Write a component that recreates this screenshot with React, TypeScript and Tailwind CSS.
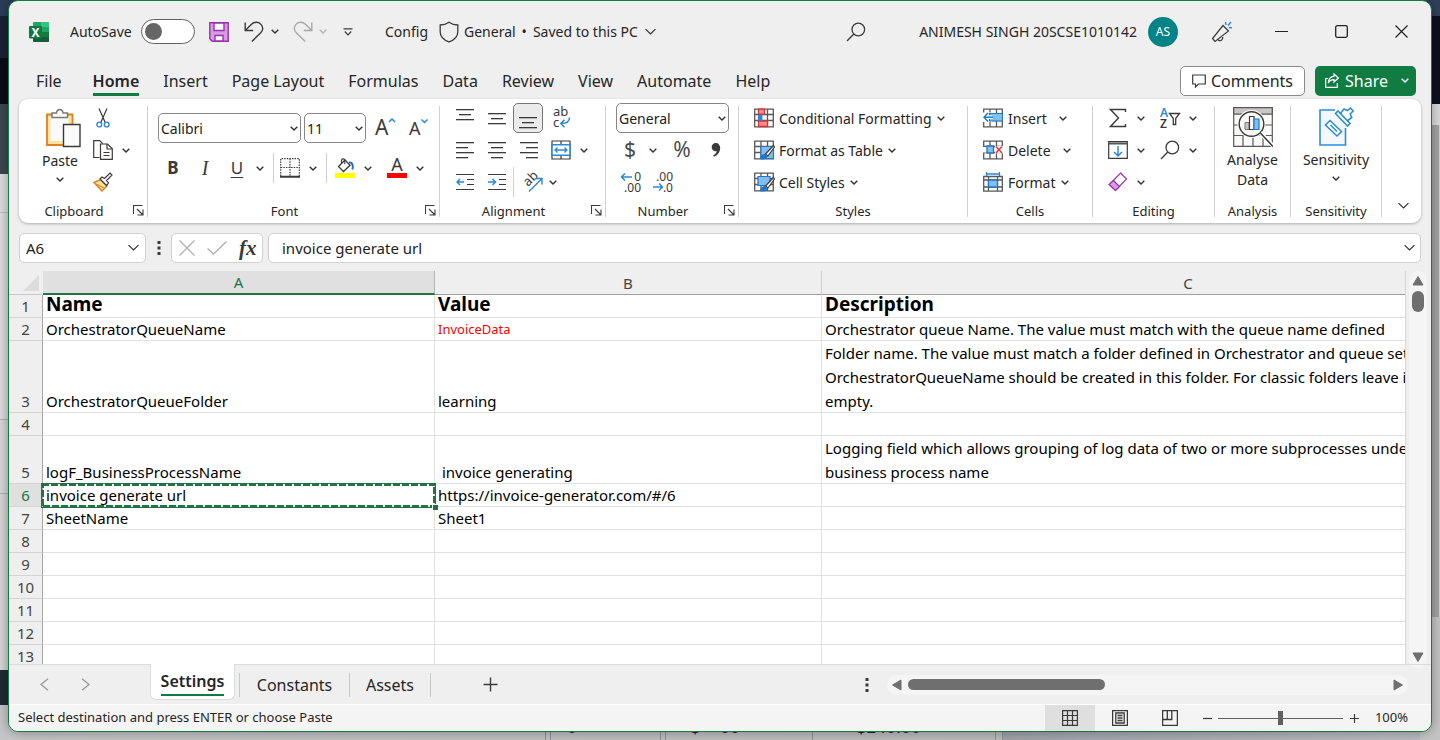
import React from "react";

type Kids = { children?: React.ReactNode };

const INK = "#3b3a39";

function Chevron({ size = 8, color = "#323130" }: { size?: number; color?: string }) {
  return (
    <svg width={size} height={size / 2 + 1} viewBox="0 0 8 5" fill="none" aria-hidden="true">
      <path d="M0.7 0.7 L4 4 L7.3 0.7" stroke={color} strokeWidth={size > 10 ? 0.8 : 1.4} />
    </svg>
  );
}

function IconButton({ label, className = "w-8", children }: Kids & { label: string; className?: string }) {
  return (
    <button type="button" aria-label={label} className={`flex h-8 shrink-0 items-center justify-center ${className}`}>
      {children}
    </button>
  );
}

function MenuArrow({ label, className = "w-3.5" }: { label: string; className?: string }) {
  return (
    <IconButton label={label} className={className}>
      <Chevron />
    </IconButton>
  );
}

function Group({
  title,
  width,
  launcher = false,
  children,
}: Kids & { title: string; width: string; launcher?: boolean }) {
  return (
    <section aria-label={title} className={`flex shrink-0 items-center ${width}`}>
      <div className="flex h-full min-w-0 flex-1 flex-col pt-[3px]">
        <div className="h-24">{children}</div>
        <div className={`flex h-[25px] items-center text-[13px] leading-4 ${launcher ? "gap-1 pr-[3px]" : ""}`}>
          <span className="flex-1 text-center">{title}</span>
          {launcher && (
            <button type="button" aria-label={`${title} settings`}>
              <svg width="11" height="11" viewBox="0 0 11 11" fill="none" stroke={INK}>
                <path d="M0.5 9V0.5H9.5M4 4l5.5 5.5M10 4.5V10H4.5" strokeWidth="1.1" />
              </svg>
            </button>
          )}
        </div>
      </div>
      <div className="h-[111px] w-px bg-[#d1d1d1]" />
    </section>
  );
}

function Picker({ label, value, className }: { label: string; value: string; className: string }) {
  return (
    <div className={`relative h-[30px] shrink-0 ${className}`}>
      <select
        aria-label={label}
        defaultValue={value}
        className="h-full w-full appearance-none rounded-[5px] border border-[#868686] bg-white pl-0.5 text-[14px] text-[#222]"
      >
        <option>{value}</option>
      </select>
      <span className="pointer-events-none absolute inset-y-0 right-[3px] flex items-center">
        <Chevron />
      </span>
    </div>
  );
}

/* ---------- icons ---------- */

function ExcelLogo() {
  return (
    <svg width="20" height="20" viewBox="0 0 20 20" aria-hidden="true">
      <rect x="4" y="0" width="16" height="20" rx="1.2" fill="#21a366" />
      <path d="M12 0h6.8A1.2 1.2 0 0 1 20 1.2V5h-8z" fill="#33c481" />
      <rect x="4" y="5" width="8" height="5" fill="#107c41" />
      <rect x="4" y="10" width="8" height="5" fill="#185c37" />
      <rect x="12" y="10" width="8" height="5" fill="#107c41" />
      <path d="M4 15h16v3.8a1.2 1.2 0 0 1-1.2 1.2H5.2A1.2 1.2 0 0 1 4 18.800z" fill="#185c37" />
      <rect x="0" y="4" width="13" height="12.500" rx="1" fill="#0f7a3f" />
      <text x="6.500" y="14.500" textAnchor="middle" fontSize="12" fontWeight="700" fill="#fff">X</text>
    </svg>
  );
}

function SaveIcon() {
  return (
    <svg width="20" height="20" viewBox="0 0 20 20" fill="none" stroke="#9b2fae" strokeWidth="1.400" aria-hidden="true">
      <path d="M0.800 0.800h18.400v18.400H3.200L0.800 16.800z" fill="#d59ddf" />
      <path d="M5 1v7.500h10V1z" fill="#fff" />
      <path d="M6 19v-5.500h8V19z" fill="#fff" />
    </svg>
  );
}

function TurnArrow({ color, flip = false }: { color: string; flip?: boolean }) {
  return (
    <svg width="20" height="22" viewBox="0 0 20 22" fill="none" stroke={color} strokeWidth="1.400" aria-hidden="true" className={flip ? "-scale-x-100" : ""}>
      <path d="M1.200 1.500v8h8M1.500 9.200L7.500 3.300C10.500 0.400 15 0.800 17.200 3.600c2 2.600 1.700 6-0.700 8.400L7.800 20.500" />
    </svg>
  );
}

function Magnifier({ size = 20 }: { size?: number }) {
  return (
    <svg width={size} height={size} viewBox="0 0 20 20" fill="none" stroke={INK} strokeWidth="1.300" aria-hidden="true">
      <circle cx="12.300" cy="7.500" r="6.300" />
      <path d="M7.800 12L1 19" />
    </svg>
  );
}

function ShieldIcon() {
  return (
    <svg width="20" height="22" viewBox="0 0 20 22" fill="none" stroke={INK} strokeWidth="1.300" aria-hidden="true">
      <path d="M10 1.200C7.500 3 4.500 3.900 1.200 4v7c0 4.500 3.500 8 8.800 9.900 5.300-1.900 8.800-5.400 8.800-9.900V4C15.500 3.900 12.500 3 10 1.200z" />
    </svg>
  );
}

function MegaphoneIcon() {
  return (
    <svg width="22" height="22" viewBox="0 0 22 22" fill="none" stroke={INK} strokeWidth="1.200" aria-hidden="true">
      <path d="M12 4.500L1.500 17.500l2.500 3L17.500 10zM12 4.500l5.500 5.500M6.500 18.300c1.300 2.400 5.300 1.700 5.300-2.200" />
      <path d="M15 4l-.5-3M17 4.500L20 1M17.800 6.500l3.200.3" stroke="#2b88d8" strokeWidth="1.500" />
    </svg>
  );
}

function PasteIcon() {
  return (
    <svg width="36" height="40" viewBox="0 0 36 40" fill="none" aria-hidden="true">
      <path d="M2 6.500h25.500V37H2z" fill="#fce3a0" stroke="#e07f1f" strokeWidth="1.800" />
      <path d="M5.500 9h18v24h-18z" fill="#fafafa" />
      <path d="M7 9.500V5h4.500c.3-2 1.500-3.500 3.300-3.500s3 1.500 3.300 3.500H22.500v4.500z" fill="#fff" stroke="#7a7a7a" strokeWidth="1.500" />
      <path d="M18.500 16.500H35V38.500H18.500z" fill="#fafafa" stroke={INK} strokeWidth="1.400" />
    </svg>
  );
}

function CutIcon() {
  return (
    <svg width="14" height="20" viewBox="0 0 14 20" fill="none" aria-hidden="true">
      <path d="M3 0.500l6.300 14.300M11 0.500L4.700 14.800" stroke={INK} strokeWidth="1.200" />
      <circle cx="3.300" cy="16.500" r="2.400" stroke="#2b88d8" strokeWidth="1.400" />
      <circle cx="10.700" cy="16.500" r="2.400" stroke="#2b88d8" strokeWidth="1.400" />
    </svg>
  );
}

function CopyIcon() {
  return (
    <svg width="20" height="20" viewBox="0 0 20 20" fill="none" stroke={INK} strokeWidth="1.200" aria-hidden="true">
      <path d="M6.500 17.500H0.700V0.700h6l3 3" />
      <path d="M7.500 4h7l4.800 4.800v10.500H7.500z" fill="#fff" />
      <path d="M14 4v5h5M10.500 12.500h6M10.500 15.500h6" />
    </svg>
  );
}

function BrushIcon() {
  return (
    <svg width="20" height="20" viewBox="0 0 20 20" fill="none" aria-hidden="true">
      <path d="M1 10.500l6.500-3 6.500 6.500-5 5z" fill="#fce3a0" stroke="#e07f1f" strokeWidth="1.400" />
      <path d="M3 12l8 4" stroke="#e07f1f" strokeWidth="1.200" />
      <path d="M7 7l2-2 2.500 1.500L17 1l2 2-5.500 5.500L15.500 11l-2 2.500z" fill="#fff" stroke={INK} strokeWidth="1.200" />
    </svg>
  );
}

function Lines({ rows }: { rows: [number, number, number][] }) {
  return (
    <svg width="18" height="18" viewBox="0 0 18 18" aria-hidden="true">
      {rows.map(([x, y, w]) => (
        <rect key={`${x}-${y}`} x={x} y={y} width={w} height="1.300" fill={INK} />
      ))}
    </svg>
  );
}

function IndentIcon({ right = false }: { right?: boolean }) {
  return (
    <svg width="18" height="18" viewBox="0 0 18 18" fill="none" aria-hidden="true">
      <path d="M0 1.500h18M11 6.500h7M11 11.500h7M0 16.500h18" stroke={INK} strokeWidth="1.200" />
      <path d={right ? "M0 9h7.500M4.500 6l3 3-3 3" : "M8 9H0.800M4 6L1 9l3 3"} stroke="#2b88d8" strokeWidth="1.500" />
    </svg>
  );
}

function WrapIcon() {
  return (
    <svg width="20" height="22" viewBox="0 0 20 22" fill="none" aria-hidden="true" className="overflow-visible">
      <text x="1" y="9" fontSize="13" fill={INK}>ab</text>
      <text x="1" y="20" fontSize="13" fill={INK}>c</text>
      <path d="M17.500 10.500c0 4-2.500 6-8.500 6M12.500 12.800L8.800 16.500l3.700 3.700" stroke="#2b88d8" strokeWidth="1.500" />
    </svg>
  );
}

function MergeIcon() {
  return (
    <svg width="20" height="20" viewBox="0 0 20 20" fill="none" aria-hidden="true">
      <path d="M1 1h18v18H1zM10 1v18" stroke={INK} strokeWidth="1.200" fill="#fff" />
      <path d="M1 4.800h18v10.400H1z" fill="#fff" stroke="#2b88d8" strokeWidth="1.600" />
      <path d="M4 10h12M6.500 7.500L4 10l2.500 2.500M13.500 7.500L16 10l-2.500 2.500" stroke="#2b88d8" strokeWidth="1.300" />
    </svg>
  );
}

function OrientIcon() {
  return (
    <svg width="22" height="22" viewBox="0 0 22 22" fill="none" aria-hidden="true" className="overflow-visible">
      <text x="0" y="0" fontSize="13" fill={INK} transform="translate(7 16) rotate(-45)">ab</text>
      <path d="M8 20.500L20.500 8M15 7.500h6v6" stroke="#2b88d8" strokeWidth="1.400" />
    </svg>
  );
}

function BordersIcon() {
  return (
    <svg width="20" height="20" viewBox="0 0 20 20" fill="none" aria-hidden="true">
      <path d="M0.700 18V0.700h18.600V18M10 0.700V18M0.700 9.500h18.600" stroke={INK} strokeWidth="1.200" strokeDasharray="1.500 1.100" />
      <path d="M0 18.800h20" stroke={INK} strokeWidth="2" />
    </svg>
  );
}

function BucketIcon() {
  return (
    <svg width="20" height="20" viewBox="0 0 20 20" fill="none" aria-hidden="true">
      <path d="M3.500 8.500L10 2l5 5.200-6.500 6.300z" stroke={INK} strokeWidth="1.300" />
      <path d="M6.500 5V2.500C6.500 0.500 9.500 0.300 9.800 2.200v4" stroke={INK} strokeWidth="1.100" />
      <path d="M14 4.500c3-.5 4.500 2 3.500 7" stroke="#1f6fb5" strokeWidth="2" />
      <rect x="0" y="15" width="20" height="5" fill="#ffff00" />
    </svg>
  );
}

function FontColorIcon() {
  return (
    <svg width="20" height="20" viewBox="0 0 20 20" aria-hidden="true" className="overflow-visible">
      <text x="10" y="13" textAnchor="middle" fontSize="18" fill={INK}>A</text>
      <rect x="0" y="15" width="20" height="5" fill="#ff0000" />
    </svg>
  );
}

function FontSizeIcon({ up = false }: { up?: boolean }) {
  return (
    <svg width="22" height="22" viewBox="0 0 22 22" fill="none" aria-hidden="true" className="overflow-visible">
      <text x="0" y="18" fontSize={up ? 21 : 18} fill={INK}>A</text>
      <path d={up ? "M14 5l3-3 3 3" : "M12.500 2.500l3 3 3-3"} stroke="#2b88d8" strokeWidth="1.500" />
    </svg>
  );
}

function DecimalIcon({ more = false }: { more?: boolean }) {
  return (
    <svg width="22" height="22" viewBox="0 0 22 22" fill="none" aria-hidden="true" className="overflow-visible">
      <text x="21" y="10" textAnchor="end" fontSize="12" fill={INK}>{more ? "0" : ".00"}</text>
      <text x="21" y="21" textAnchor="end" fontSize="12" fill={INK}>{more ? ".00" : ".0"}</text>
      <path d={more ? "M12 6H1.500M5 2.500L1.500 6 5 9.500" : "M1 16h9.500M7 12.500l3.500 3.500L7 19.500"} stroke="#2b88d8" strokeWidth="1.500" />
    </svg>
  );
}

function GridBase() {
  return <path d="M0.700 1.200h18.600v17.600H0.700zM0.700 6.500h18.600M0.700 12.500h18.600M7 1.200v17.600M13.500 1.200v17.600" stroke="#5a5857" strokeWidth="1.300" fill="#fff" />;
}

function ConditionalIcon() {
  return (
    <svg width="20" height="20" viewBox="0 0 20 20" fill="none" aria-hidden="true">
      <GridBase />
      <path d="M4.500 1.200h6v5h-6zM4.500 13h9v5.500h-9z" fill="#ff8a8a" stroke="#d13438" strokeWidth="1.300" />
      <path d="M4 7h4.500v5.500H4z" fill="#2b88d8" />
    </svg>
  );
}

function TableBrushIcon({ cell = false }: { cell?: boolean }) {
  return (
    <svg width="20" height="20" viewBox="0 0 20 20" fill="none" aria-hidden="true" className="overflow-visible">
      <GridBase />
      <path d={cell ? "M4 4.500h12v9H4z" : "M7 6.500h12.500v12H7z"} fill="#83beec" stroke="#1f78c8" strokeWidth="1.200" />
      <path d="M19.500 5.500l1 1.500-6.500 9-2.500-2z" fill="#fff" stroke={INK} strokeWidth="1.200" />
      <path d="M11 14c-3-.5-4 1.500-5.500 5 4 1.300 8 .5 8-3z" fill="#1f78c8" />
    </svg>
  );
}

function InsertIcon() {
  return (
    <svg width="20" height="20" viewBox="0 0 20 20" fill="none" aria-hidden="true">
      <GridBase />
      <path d="M0 4.500h9v9.500H0z" fill="#fff" />
      <path d="M6.500 5.500h13v7.500h-13z" fill="#83beec" stroke="#1f78c8" strokeWidth="1.200" />
      <path d="M9.500 9.300H1" stroke="#fff" strokeWidth="3.500" />
      <path d="M10 9.300H1M5 5L1 9.300 5 13.500" stroke="#1f78c8" strokeWidth="1.400" />
    </svg>
  );
}

function DeleteIcon() {
  return (
    <svg width="20" height="20" viewBox="0 0 20 20" fill="none" aria-hidden="true">
      <GridBase />
      <path d="M12 6h8v7.500h-8zM0 7h4v5.500H0z" fill="#fff" />
      <path d="M4 6h6.500v7H4z" fill="#83beec" stroke="#1f78c8" strokeWidth="1.300" />
      <path d="M13 6.500l6 6.500M19 6.500L13 13" stroke="#e03a3e" strokeWidth="1.600" />
    </svg>
  );
}

function FormatIcon() {
  return (
    <svg width="20" height="20" viewBox="0 0 20 20" fill="none" aria-hidden="true">
      <path d="M0.700 4.500h18.600v14.700H0.700zM0.700 8h18.600M0.700 15h18.600M5.500 4.500v14.700M14.500 4.500v14.700" stroke="#5a5857" strokeWidth="1.300" />
      <path d="M5.500 8h9v7h-9z" fill="#83beec" stroke="#1f78c8" strokeWidth="1.300" />
      <path d="M3.500 0v4M16.500 0v4M3.500 2h13" stroke="#2b88d8" strokeWidth="1.300" />
    </svg>
  );
}

function SigmaIcon() {
  return (
    <svg width="18" height="20" viewBox="0 0 18 20" fill="none" stroke={INK} strokeWidth="1.400" aria-hidden="true">
      <path d="M16.500 4V1.500h-15L9.500 10l-8 8.500h15V16" />
    </svg>
  );
}

function SortIcon() {
  return (
    <svg width="22" height="22" viewBox="0 0 22 22" fill="none" aria-hidden="true" className="overflow-visible">
      <text x="1" y="10" fontSize="12" fontWeight="600" fill="#2b88d8">A</text>
      <text x="1" y="21" fontSize="12" fontWeight="600" fill={INK}>Z</text>
      <path d="M10.500 6.500h10l-3.800 5v6h-2.400v-6z" stroke={INK} strokeWidth="1.300" />
    </svg>
  );
}

function FillDownIcon() {
  return (
    <svg width="20" height="18" viewBox="0 0 20 18" fill="none" aria-hidden="true">
      <path d="M0.700 0.700h18.600v16.600H0.700z" fill="#fff" stroke={INK} strokeWidth="1.200" />
      <path d="M0.700 2.500h18.600" stroke="#5a5857" strokeWidth="2" />
      <path d="M10 5v9.500M6 11l4 4 4-4" stroke="#2b88d8" strokeWidth="1.500" />
    </svg>
  );
}

function EraserIcon() {
  return (
    <svg width="20" height="20" viewBox="0 0 20 20" fill="none" stroke="#9b2fae" strokeWidth="1.200" aria-hidden="true">
      <path d="M12.500 1l6 6L7.500 18.500l-6-6z" fill="#fff" />
      <path d="M5.500 8.500l6 6-4 4-6.500-6z" fill="#d59ddf" />
    </svg>
  );
}

function AnalyseIcon() {
  return (
    <svg width="40" height="40" viewBox="0 0 40 40" fill="none" aria-hidden="true">
      <path d="M0.700 0.700h38.600v38.600H0.700zM0.700 18h38.600M0.700 28.500h38.600M10 28.500v11M20 5v34M30 28.500v11" fill="#fafafa" stroke="#5a5857" strokeWidth="1.200" />
      <path d="M0.700 0.700h38.600v6.500H0.700z" fill="#c8c6c4" stroke="#5a5857" strokeWidth="1.300" />
      <circle cx="18.500" cy="17" r="14" fill="#fafafa" />
      <circle cx="18.500" cy="17" r="12.300" fill="#fafafa" stroke={INK} strokeWidth="1.400" />
      <path d="M12 15.500h4v7h-4z" fill="#c8c6c4" stroke="#7a7a7a" />
      <path d="M16.500 9.500h4.500v13h-4.500z" fill="#fff" stroke={INK} strokeWidth="1.200" />
      <path d="M21 12h5v10.500h-5z" fill="#83beec" stroke="#1f78c8" strokeWidth="1.200" />
      <path d="M27.500 26L40 39" stroke="#fff" strokeWidth="4" />
      <path d="M27.300 26L40 39.500" stroke={INK} strokeWidth="1.500" />
    </svg>
  );
}

function SensitivityIcon() {
  return (
    <svg width="36" height="40" viewBox="0 0 36 40" fill="none" stroke="#2b8fd6" strokeWidth="1.600" aria-hidden="true">
      <path d="M17 3H2v35h25.500V21" fill="#f4f8fc" />
      <path d="M12 13.500l11.500 11-4.500 4.500L7.500 18z" fill="#fff" />
      <path d="M12.500 18l6.500 6.500" />
      <path d="M17.500 6.500l12 12.500 2.500-2.500L20 4z" fill="#fff" />
      <path d="M22.500 6.500l3.500-4.500 3.500 1.500L32.500 1l2.700 3-3 3 1.500 3.500-4.500 3.500" />
    </svg>
  );
}

function SmallTriangle({ dir }: { dir: "up" | "down" | "left" | "right" }) {
  const d = {
    up: "M6 1.500L11 10H1z",
    down: "M6 10.500L11 2H1z",
    left: "M1.500 6L10 1v10z",
    right: "M10.500 6L2 1v10z",
  }[dir];
  return (
    <svg width="12" height="12" viewBox="0 0 12 12" aria-hidden="true">
      <path d={d} fill="#6f6f6f" stroke="#6f6f6f" strokeLinejoin="round" />
    </svg>
  );
}

/* ---------- desktop behind the window ---------- */

function Backdrop() {
  return (
    <div aria-hidden="true" className="absolute inset-0 flex overflow-hidden bg-[#bcbcbc]">
      <div className="flex w-5 flex-col">
        <div className="h-4 bg-[#2b3d57]" />
        <div className="h-[42px] bg-[#1b2137]" />
        <div className="h-[46px] bg-[#0b0c19]" />
        <div className="h-[70px] bg-[#3b4750]" />
        <div className="h-[39px] border-b border-[#bcbcbe] bg-[#dcdddf]" />
        <div className="h-[207px] border-b border-[#a9afb9] bg-linear-to-r from-[#dedede] to-[#cfcfcf]" />
        <div className="h-[74px] border-b border-[#a9afb9] bg-linear-to-r from-[#d8d8d8] to-[#c6c6c6]" />
        <div className="flex-1 bg-linear-to-r from-[#d8d8d8] to-[#bfbfbf]" />
        <div className="h-[35px] bg-[#202a33]" />
        <div className="h-[35px] bg-[#c6c6c8]" />
      </div>
      <div className="flex min-w-0 flex-1 flex-col justify-end bg-[#2b3d57]">
        <div className="flex h-6 items-stretch bg-linear-to-r from-[#c4c4c4] to-[#b6b6b6] font-['Liberation_Sans'] text-[18px] leading-[22px] text-[#1c2333]">
          <div className="w-[525px]" />
          <div className="w-1.5 border-x border-[#8e9297]" />
          <div className="w-[109px] pl-4">0</div>
          <div className="w-1.5 border-x border-[#8e9297]" />
          <div className="flex w-[147px] gap-5 border-r border-[#8e9297] pl-6">
            <span>$</span>
            <span>00</span>
          </div>
          <div className="w-[182px] pl-[43px]">$140.00</div>
          <div className="w-2 border-x border-[#8e9297]" />
          <div className="flex-1 bg-linear-to-r from-[#9fa2a8] to-[#b9bbc0]" />
        </div>
      </div>
      <div className="flex w-5 flex-col">
        <div className="h-4 bg-[#2f405b]" />
        <div className="h-[88px] bg-[#0d0f20]" />
        <div className="h-[21px] bg-[#dadada]" />
        <div className="h-[492px] border-r border-[#d0d0d0] bg-[#a3a3a3]" />
        <div className="flex-1 bg-[#c4c4c4]" />
      </div>
    </div>
  );
}

/* ---------- window chrome ---------- */

function TitleBar() {
  return (
    <header className="flex h-[61px] shrink-0 items-center pl-5 text-[14px]">
      <ExcelLogo />
      <label className="ml-[21px] flex items-center gap-2">
        <span className="w-[63px] whitespace-nowrap">AutoSave</span>
        <input
          type="checkbox"
          role="switch"
          className="h-[25px] w-[54px] appearance-none rounded-full border border-[#616161] bg-white before:mt-[3px] before:ml-[3px] before:block before:size-[17px] before:rounded-full before:bg-[#666]"
        />
      </label>
      <button type="button" aria-label="Save" className="ml-3.5"><SaveIcon /></button>
      <button type="button" aria-label="Undo" className="ml-[15px]"><TurnArrow color={INK} /></button>
      <button type="button" aria-label="Undo history" className="ml-[7px]"><Chevron /></button>
      <button type="button" aria-label="Redo" className="ml-3.5"><TurnArrow color="#a8a8a8" flip /></button>
      <button type="button" aria-label="Redo history" className="ml-1.5"><Chevron color="#b5b5b5" /></button>
      <button type="button" aria-label="Customise toolbar" className="ml-4">
        <svg width="10" height="8" viewBox="0 0 10 8" fill="none" stroke={INK} strokeWidth="1.200">
          <path d="M0.500 0.800h9M1.800 3.500L5 6.800l3.200-3.300" />
        </svg>
      </button>
      <span className="ml-8 w-[43px] whitespace-nowrap">Config</span>
      <button type="button" className="ml-[11px] flex items-center gap-[5px] whitespace-nowrap">
        <ShieldIcon />
        <span>General</span>
      </button>
      <button type="button" className="ml-1.5 flex items-center gap-1.5 whitespace-nowrap">
        <span>•</span>
        <span>Saved to this PC</span>
        <Chevron size={13} />
      </button>
      <div className="ml-auto flex items-center">
        <button type="button" aria-label="Search" className="mr-[49px]"><Magnifier /></button>
        <span className="min-w-[222px] text-right whitespace-nowrap">ANIMESH SINGH 20SCSE1010142</span>
        <button type="button" className="ml-[11px] size-[30px] rounded-full bg-[#048387] text-[12px] text-white">AS</button>
        <button type="button" aria-label="Coming soon" className="mr-[18px] ml-[33px]"><MegaphoneIcon /></button>
        <button type="button" aria-label="Minimise" className="flex h-10 w-[60px] items-center justify-center">
          <svg width="13" height="13" viewBox="0 0 13 13"><path d="M0 6.500h13" stroke="#222" strokeWidth="1.200" /></svg>
        </button>
        <button type="button" aria-label="Maximise" className="flex h-10 w-[60px] items-center justify-center">
          <svg width="13" height="13" viewBox="0 0 13 13" fill="none"><rect x="0.700" y="0.700" width="11.600" height="11.600" rx="1.500" stroke="#222" strokeWidth="1.300" /></svg>
        </button>
        <button type="button" aria-label="Close" className="flex h-10 w-[60px] items-center justify-center">
          <svg width="13" height="13" viewBox="0 0 13 13"><path d="M0.500 0.500l12 12M12.500 0.500l-12 12" stroke="#222" strokeWidth="1.200" /></svg>
        </button>
      </div>
    </header>
  );
}

const MENU = ["Home", "Insert", "Page Layout", "Formulas", "Data", "Review", "View", "Automate", "Help"];

function MenuBar() {
  return (
    <nav className="flex h-[37px] shrink-0 items-center pr-[15px] pl-[27px] text-[16px]">
      <button type="button" className="mr-[31px]">File</button>
      <div className="flex items-center gap-6">
        {MENU.map((item) => (
          <button
            key={item}
            type="button"
            className={
              item === "Home"
                ? "border-y-3 border-t-transparent border-b-[#107c41] font-semibold leading-6 whitespace-nowrap"
                : "leading-6 whitespace-nowrap"
            }
          >
            {item}
          </button>
        ))}
      </div>
      <div className="ml-auto flex gap-2.5">
        <button type="button" className="flex h-[30px] w-[125px] items-center justify-center gap-[5px] rounded-[5px] border border-[#8a8a8a] bg-white">
          <svg width="14" height="14" viewBox="0 0 14 14" fill="none" stroke={INK} strokeWidth="1.200" aria-hidden="true">
            <path d="M0.700 1h12.600v9H6.500l-3 3v-3H0.700z" />
          </svg>
          Comments
        </button>
        <button type="button" className="flex h-[30px] w-[101px] items-center gap-1.5 rounded-[5px] bg-[#107c41] pr-[7px] pl-2.5 text-white">
          <svg width="14" height="15" viewBox="0 0 14 15" fill="none" stroke="#fff" strokeWidth="1.200" aria-hidden="true">
            <path d="M3 5.500H0.700v8.800h11.600V10M9 1l4.300 4L9 9V6.700C6.500 6.700 4.500 7.500 3.300 10 3.500 6 5.500 3.500 9 3.300z" />
          </svg>
          Share
          <span className="ml-auto"><Chevron color="#fff" /></span>
        </button>
      </div>
    </nav>
  );
}

function BigButton({ icon, lines, arrow = false }: { icon: React.ReactNode; lines: string[]; arrow?: boolean }) {
  return (
    <button type="button" className="flex w-full flex-col items-center pt-[5px] text-[14px] leading-5">
      {icon}
      <span className="mt-[3px] flex flex-col items-center whitespace-nowrap">
        {lines.map((line) => <span key={line}>{line}</span>)}
      </span>
      {arrow && <span className="mt-1.5"><Chevron /></span>}
    </button>
  );
}

function LabelButton({ icon, label, split = false }: { icon: React.ReactNode; label: string; split?: boolean }) {
  return (
    <div className={`flex h-8 items-center ${split ? "gap-3" : "gap-[5px]"}`}>
      <button type="button" className="flex items-center gap-[5px] whitespace-nowrap">
        {icon}
        {label}
      </button>
      <button type="button" aria-label={`${label} options`}><Chevron /></button>
    </div>
  );
}

function Ribbon() {
  return (
    <div className="mx-2.5 flex h-[124px] shrink-0 rounded-[9px] bg-white text-[14px] shadow-[0_1px_3px_rgba(0,0,0,0.28)]">
      <Group title="Clipboard" width="w-[129px]" launcher>
        <div className="flex pl-3.5">
          <button type="button" className="flex w-[54px] flex-col items-center pt-1.5 leading-5">
            <span className="pl-1.5"><PasteIcon /></span>
            <span className="mt-[3px]">Paste</span>
            <span className="mt-1.5"><Chevron /></span>
          </button>
          <div>
            <IconButton label="Cut"><CutIcon /></IconButton>
            <div className="flex">
              <IconButton label="Copy"><CopyIcon /></IconButton>
              <MenuArrow label="Copy options" />
            </div>
            <IconButton label="Format painter"><BrushIcon /></IconButton>
          </div>
        </div>
      </Group>

      <Group title="Font" width="w-[292px]" launcher>
        <div className="flex items-center pt-2.5 pl-2.5">
          <Picker label="Font name" value="Calibri" className="w-[143px]" />
          <Picker label="Font size" value="11" className="ml-[3px] w-[62px]" />
          <IconButton label="Increase font size" className="ml-2 w-6"><FontSizeIcon up /></IconButton>
          <IconButton label="Decrease font size" className="ml-2.5 w-6"><FontSizeIcon /></IconButton>
        </div>
        <div className="mt-2 flex items-center pl-[9px] text-[17px] text-[#3b3a39]">
          <IconButton label="Bold"><b className="font-bold">B</b></IconButton>
          <IconButton label="Italic"><i className="font-['Liberation_Serif'] text-[20px]">I</i></IconButton>
          <IconButton label="Underline"><u className="underline-offset-3">U</u></IconButton>
          <MenuArrow label="Underline options" />
          <span className="mx-1.5 h-[30px] w-px bg-[#d1d1d1]" />
          <IconButton label="Borders" className="w-5"><BordersIcon /></IconButton>
          <MenuArrow label="Border options" className="ml-1.5 w-3.5" />
          <span className="mx-1.5 h-[30px] w-px bg-[#d1d1d1]" />
          <IconButton label="Fill colour" className="ml-0.5 w-5"><BucketIcon /></IconButton>
          <MenuArrow label="Fill colour options" className="ml-1.5 w-3.5" />
          <IconButton label="Font colour" className="ml-3 w-5"><FontColorIcon /></IconButton>
          <MenuArrow label="Font colour options" className="ml-1.5 w-3.5" />
        </div>
      </Group>

      <Group title="Alignment" width="w-[166px]" launcher>
        <div className="flex pl-[9px]">
          <IconButton label="Top align"><Lines rows={[[0, 0, 18], [3, 5, 12], [0, 10, 18]]} /></IconButton>
          <IconButton label="Middle align"><Lines rows={[[0, 4, 18], [3, 9, 12], [0, 14, 18]]} /></IconButton>
          <button type="button" aria-label="Bottom align" className="mt-px flex h-[30px] w-[30px] items-end justify-center rounded-[5px] border border-[#767676] bg-[#ebebeb] pb-[3px]">
            <Lines rows={[[0, 6, 18], [3, 11, 12], [0, 16, 18]]} />
          </button>
          <IconButton label="Wrap text" className="ml-[3px] w-8"><WrapIcon /></IconButton>
        </div>
        <div className="flex pl-[9px]">
          <IconButton label="Align left"><Lines rows={[[0, 1, 18], [0, 6, 12], [0, 11, 18], [0, 16, 12]]} /></IconButton>
          <IconButton label="Centre"><Lines rows={[[0, 1, 18], [3, 6, 12], [0, 11, 18], [3, 16, 12]]} /></IconButton>
          <IconButton label="Align right"><Lines rows={[[0, 1, 18], [6, 6, 12], [0, 11, 18], [6, 16, 12]]} /></IconButton>
          <IconButton label="Merge and centre"><MergeIcon /></IconButton>
          <MenuArrow label="Merge options" />
        </div>
        <div className="flex items-center pl-[9px]">
          <IconButton label="Decrease indent"><IndentIcon /></IconButton>
          <IconButton label="Increase indent"><IndentIcon right /></IconButton>
          <span className="h-[30px] w-px bg-[#d1d1d1]" />
          <IconButton label="Orientation" className="ml-1 w-7"><OrientIcon /></IconButton>
          <MenuArrow label="Orientation options" />
        </div>
      </Group>

      <Group title="Number" width="w-[133px]" launcher>
        <div className="flex h-8 items-center pl-2.5">
          <Picker label="Number format" value="General" className="w-[113px]" />
        </div>
        <div className="flex pl-2 text-[21px] text-[#4a4948]">
          <IconButton label="Currency">$</IconButton>
          <MenuArrow label="Currency options" />
          <IconButton label="Percent" className="ml-1 w-9">%</IconButton>
          <IconButton label="Comma style">
            <svg width="10" height="16" viewBox="0 0 12 18" aria-hidden="true">
              <path d="M5.500 0.500C8.800 0.500 11 3 11 6.500c0 4.500-2.800 8.500-7.500 10.500l-.8-1.500c2.300-1.200 3.800-3 4.200-5C3.500 11.200 0.800 9 0.800 5.500 0.800 2.500 3 0.500 5.500 0.500z" fill={INK} />
            </svg>
          </IconButton>
        </div>
        <div className="flex pl-[9px]">
          <IconButton label="Increase decimal"><DecimalIcon more /></IconButton>
          <IconButton label="Decrease decimal"><DecimalIcon /></IconButton>
        </div>
      </Group>

      <Group title="Styles" width="w-[229px]">
        <div className="pl-[15px]">
          <LabelButton icon={<ConditionalIcon />} label="Conditional Formatting" />
          <LabelButton icon={<TableBrushIcon />} label="Format as Table" />
          <LabelButton icon={<TableBrushIcon cell />} label="Cell Styles" />
        </div>
      </Group>

      <Group title="Cells" width="w-[125px]">
        <div className="pl-[15px]">
          <LabelButton icon={<InsertIcon />} label="Insert" split />
          <LabelButton icon={<DeleteIcon />} label="Delete" split />
          <LabelButton icon={<FormatIcon />} label="Format" />
        </div>
      </Group>

      <Group title="Editing" width="w-[122px]">
        <div className="grid grid-cols-[32px_20px_32px_20px] pl-[9px]">
          <IconButton label="AutoSum"><SigmaIcon /></IconButton>
          <MenuArrow label="AutoSum options" />
          <IconButton label="Sort and filter"><SortIcon /></IconButton>
          <MenuArrow label="Sort options" />
          <IconButton label="Fill"><FillDownIcon /></IconButton>
          <MenuArrow label="Fill options" />
          <IconButton label="Find and select"><Magnifier /></IconButton>
          <MenuArrow label="Find options" />
          <IconButton label="Clear"><EraserIcon /></IconButton>
          <MenuArrow label="Clear options" />
        </div>
      </Group>

      <Group title="Analysis" width="w-[76px]">
        <BigButton icon={<AnalyseIcon />} lines={["Analyse", "Data"]} />
      </Group>

      <Group title="Sensitivity" width="w-[91px]">
        <BigButton icon={<SensitivityIcon />} lines={["Sensitivity"]} arrow />
      </Group>

      <div className="flex flex-1 items-end justify-center pb-3.5 pl-[3px]">
        <button type="button" aria-label="Collapse ribbon" className="flex"><Chevron size={13} /></button>
      </div>
    </div>
  );
}

function DotsVertical() {
  return (
    <svg width="4" height="14" viewBox="0 0 4 14" fill={INK} aria-hidden="true">
      <path d="M0.500 0h3v3h-3zM0.500 5.500h3v3h-3zM0.500 11h3v3h-3z" />
    </svg>
  );
}

function FormulaBar() {
  return (
    <div className="mx-2.5 mt-2.5 flex h-[30px] shrink-0 items-center text-[15px] text-[#222]">
      <div className="relative h-full w-[127px] shrink-0">
        <input aria-label="Name box" defaultValue="A6" className="h-full w-full rounded-[5px] border border-[#d0d0d0] bg-white pl-1.5" />
        <span className="pointer-events-none absolute inset-y-0 right-1.5 flex items-center"><Chevron size={13} /></span>
      </div>
      <span className="flex w-[25px] justify-center"><DotsVertical /></span>
      <div className="flex h-full w-[92px] shrink-0 items-center gap-3 rounded-[5px] border border-[#d0d0d0] bg-white pl-[7px]">
        <button type="button" aria-label="Cancel">
          <svg width="16" height="16" viewBox="0 0 16 16"><path d="M0.500 0.500l15 15M15.500 0.500l-15 15" stroke="#b0b0b0" strokeWidth="1.300" /></svg>
        </button>
        <button type="button" aria-label="Enter">
          <svg width="20" height="14" viewBox="0 0 20 14" fill="none"><path d="M0.500 7.500l6 5.500L19.500 0.500" stroke="#b0b0b0" strokeWidth="1.300" /></svg>
        </button>
        <button type="button" aria-label="Insert function" className="font-['Liberation_Serif'] text-[21px] leading-6 font-bold text-[#3b3a39] italic">fx</button>
      </div>
      <div className="relative ml-[5px] h-full min-w-0 flex-1">
        <input aria-label="Formula" defaultValue="invoice generate url" className="h-full w-full rounded-[5px] border border-[#d0d0d0] bg-white pl-[13px]" />
        <span className="pointer-events-none absolute inset-y-0 right-[5px] flex items-center"><Chevron size={13} /></span>
      </div>
    </div>
  );
}

/* ---------- sheet ---------- */

type Row = { h: string; a?: string; b?: string; c?: string[] };

const ROWS: Row[] = [
  { h: "h-[23px]", a: "Name", b: "Value", c: ["Description"] },
  { h: "h-[23px]", a: "OrchestratorQueueName", b: "InvoiceData", c: ["Orchestrator queue Name. The value must match with the queue name defined"] },
  {
    h: "h-[72px]",
    a: "OrchestratorQueueFolder",
    b: "learning",
    c: [
      "Folder name. The value must match a folder defined in Orchestrator and queue set in",
      "OrchestratorQueueName should be created in this folder. For classic folders leave it",
      "empty.",
    ],
  },
  { h: "h-[23px]" },
  {
    h: "h-12",
    a: "logF_BusinessProcessName",
    b: "\u00a0invoice generating",
    c: ["Logging field which allows grouping of log data of two or more subprocesses under the same", "business process name"],
  },
  { h: "h-[23px]", a: "invoice generate url", b: "https://invoice-generator.com/#/6" },
  { h: "h-[23px]", a: "SheetName", b: "Sheet1" },
  { h: "h-[23px]" },
  { h: "h-[23px]" },
  { h: "h-[23px]" },
  { h: "h-[23px]" },
  { h: "h-[23px]" },
  { h: "h-[23px]" },
];

const CELL = "border-r border-b border-[#e0e0e0] p-0 pl-[3px] whitespace-nowrap";

function CopiedOutline() {
  return (
    <div className="pointer-events-none absolute -top-px -right-[2px] -bottom-[2px] -left-0.5 border border-[#217346]">
      <svg className="block h-full w-full" aria-hidden="true">
        <rect width="100%" height="100%" fill="none" stroke="#217346" strokeWidth="4" strokeDasharray="7 2" />
      </svg>
      <span className="absolute -right-[3px] -bottom-[3px] size-[6px] border-t border-l border-white bg-[#217346]" />
    </div>
  );
}

function SheetTable() {
  return (
    <table className="w-[1545px] table-fixed border-separate border-spacing-0 text-[15px] leading-[22px] text-black">
      <colgroup>
        <col className="w-[34px]" />
        <col className="w-[392px]" />
        <col className="w-[387px]" />
        <col className="w-[732px]" />
      </colgroup>
      <thead>
        <tr className="h-6 text-[#444]">
          <th aria-label="Select all" className="border-r border-b border-r-transparent border-b-[#c9c9c9] bg-[#efefef] p-0 align-bottom">
            <svg width="16" height="16" viewBox="0 0 16 16" className="mr-[3px] mb-[3px] ml-auto" aria-hidden="true"><path d="M16 0v16H0z" fill="#dcdcdc" /></svg>
          </th>
          <th scope="col" className="border-r border-b-2 border-r-[#b5b5b5] border-b-[#217346] bg-[#e0e0e0] p-0 font-normal text-[#217346]">A</th>
          <th scope="col" className="border-r border-b border-r-[#d0d0d0] border-b-[#9f9f9f] bg-[#efefef] p-0 font-normal">B</th>
          <th scope="col" className="border-b border-[#9f9f9f] bg-[#efefef] p-0 font-normal">C</th>
        </tr>
      </thead>
      <tbody>
        {ROWS.map((row, i) => {
          const active = i === 5;
          const heading = i === 0 ? "align-top text-[19px] leading-[18px] font-bold" : "align-bottom";
          const lines = i < 2 ? "" : "-mt-0.5 -mb-px leading-6";
          return (
            <tr key={i} className={row.h}>
              <th
                scope="row"
                className={`border-r border-b border-r-[#a6a6a6] border-b-[#d4d4d4] p-0 text-center align-bottom font-normal ${active ? "bg-[#e0e0e0] text-[#217346]" : "bg-[#efefef] text-[#444]"}`}
              >
                {i + 1}
              </th>
              <td className={active ? `relative align-bottom ${CELL}` : `${CELL} ${heading}`}>
                {row.a}
                {active && <CopiedOutline />}
              </td>
              <td className={i === 1 ? `${CELL} align-bottom text-[13px] text-[#f00]` : `${CELL} ${heading}`}>{row.b}</td>
              <td className={`${CELL} ${heading}`}>
                {row.c && <div className={lines}>{row.c.map((line) => <div key={line}>{line}</div>)}</div>}
              </td>
            </tr>
          );
        })}
      </tbody>
    </table>
  );
}

function Sheet() {
  return (
    <main className="mt-2 flex min-h-0 flex-1">
      <div className="min-w-0 flex-1 overflow-hidden border-r border-[#d8d8d8] bg-white">
        <SheetTable />
      </div>
      <div className="flex w-[25px] pl-[3px]">
        <div className="-mb-1 flex w-[18px] flex-col items-center rounded-full bg-[#f5f5f5] pt-1 pb-[5px]">
          <button type="button" aria-label="Scroll up"><SmallTriangle dir="up" /></button>
          <div className="mt-1 h-[21px] w-3 rounded-full bg-[#6f6f6f]" />
          <button type="button" aria-label="Scroll down" className="mt-auto"><SmallTriangle dir="down" /></button>
        </div>
      </div>
    </main>
  );
}

function SheetTabs() {
  return (
    <div className="flex h-10 shrink-0 items-center border-t border-[#dcdcdc] text-[16px]">
      <div className="flex h-full min-w-0 flex-1 items-center">
        <button type="button" aria-label="Previous sheet" className="ml-[31px]">
          <svg width="9" height="13" viewBox="0 0 9 13" fill="none" stroke="#999" strokeWidth="1.300"><path d="M8 0.700L1 6.500l7 5.800" /></svg>
        </button>
        <button type="button" aria-label="Next sheet" className="ml-8">
          <svg width="9" height="13" viewBox="0 0 9 13" fill="none" stroke="#999" strokeWidth="1.300"><path d="M1 0.700l7 5.800-7 5.800" /></svg>
        </button>
        <button type="button" className="-mt-px ml-[60px] flex h-9 w-[85px] justify-center self-start rounded-b-md border border-t-0 border-[#dcdcdc] bg-white">
          <span className="mt-[5px] h-[27px] border-b-2 border-[#107c41] leading-6 font-semibold">Settings</span>
        </button>
        <span className="ml-1 h-6 w-px bg-[#c8c8c8]" />
        <button type="button" className="w-[109px]">Constants</button>
        <span className="h-6 w-px bg-[#c8c8c8]" />
        <button type="button" className="w-20">Assets</button>
        <span className="h-6 w-px bg-[#c8c8c8]" />
        <button type="button" aria-label="New sheet" className="ml-[52px]">
          <svg width="15" height="15" viewBox="0 0 15 15" stroke={INK} strokeWidth="1.400"><path d="M7.500 0.500v14M0.500 7.500h14" /></svg>
        </button>
      </div>
      <DotsVertical />
      <div className="mr-[23px] ml-[18px] flex h-5 w-[521px] items-center rounded-full bg-[#f5f5f5] px-1">
        <button type="button" aria-label="Scroll left"><SmallTriangle dir="left" /></button>
        <div className="ml-[5px] h-[11px] w-[197px] rounded-full bg-[#6f6f6f]" />
        <button type="button" aria-label="Scroll right" className="ml-auto"><SmallTriangle dir="right" /></button>
      </div>
    </div>
  );
}

function StatusBar() {
  return (
    <footer className="flex h-[27px] shrink-0 items-center border-t border-white bg-[#f4f4f4] pl-[9px] text-[13px]">
      <span className="flex-1">Select destination and press ENTER or choose Paste</span>
      <button type="button" aria-label="Normal view" className="flex h-full w-[50px] items-center justify-center bg-[#dfdfdf]">
        <svg width="16" height="16" viewBox="0 0 16 16" fill="none" stroke={INK} strokeWidth="1.200"><path d="M0.600 0.600h14.800v14.800H0.600zM0.600 5.500h14.800M0.600 10.500h14.800M5.500 0.600v14.800M10.500 0.600v14.800" /></svg>
      </button>
      <button type="button" aria-label="Page layout view" className="flex h-full w-[50px] items-center justify-center">
        <svg width="16" height="16" viewBox="0 0 16 16" fill="none" stroke={INK} strokeWidth="1.300"><path d="M0.600 0.600h14.800v14.800H0.600zM3.800 3h8.400v10H3.800zM5.500 5.500h5M5.500 8h5M5.500 10.500h5" /></svg>
      </button>
      <button type="button" aria-label="Page break view" className="flex h-full w-[49px] items-center justify-center">
        <svg width="16" height="16" viewBox="0 0 16 16" fill="none" stroke={INK} strokeWidth="1.300"><path d="M0.600 0.600h14.800v14.800H0.600zM0.600 9.500h9.200V0.600M5.300 0.600v8.900" /></svg>
      </button>
      <button type="button" aria-label="Zoom out" className="ml-[7px] flex w-3 justify-center">
        <svg width="9" height="9" viewBox="0 0 9 9" stroke={INK} strokeWidth="1.200"><path d="M0 4.500h9" /></svg>
      </button>
      <input
        type="range"
        aria-label="Zoom"
        min={0}
        max={100}
        defaultValue={50}
        className="mx-[5px] h-4 w-[125px] appearance-none bg-transparent [&::-webkit-slider-runnable-track]:h-px [&::-webkit-slider-runnable-track]:bg-[#616161] [&::-webkit-slider-thumb]:-mt-[7px] [&::-webkit-slider-thumb]:h-3.5 [&::-webkit-slider-thumb]:w-[5px] [&::-webkit-slider-thumb]:appearance-none [&::-webkit-slider-thumb]:bg-[#616161]"
      />
      <button type="button" aria-label="Zoom in" className="flex w-3 justify-center">
        <svg width="9" height="9" viewBox="0 0 9 9" stroke={INK} strokeWidth="1.200"><path d="M0 4.500h9M4.500 0v9" /></svg>
      </button>
      <button type="button" className="mr-[23px] w-12 text-right">100%</button>
    </footer>
  );
}

export default function App() {
  return (
    <div className="relative h-screen min-h-[480px] overflow-hidden font-['Noto_Sans','Open_Sans',sans-serif] text-[#262626]">
      <Backdrop />
      <div className="relative mx-2 flex h-[calc(100%-8px)] flex-col overflow-hidden rounded-[10px] border border-[#107c41] bg-[#efefef] shadow-[0_0_12px_rgba(0,0,0,0.35)]">
        <TitleBar />
        <MenuBar />
        <Ribbon />
        <FormulaBar />
        <Sheet />
        <SheetTabs />
        <StatusBar />
      </div>
    </div>
  );
}
